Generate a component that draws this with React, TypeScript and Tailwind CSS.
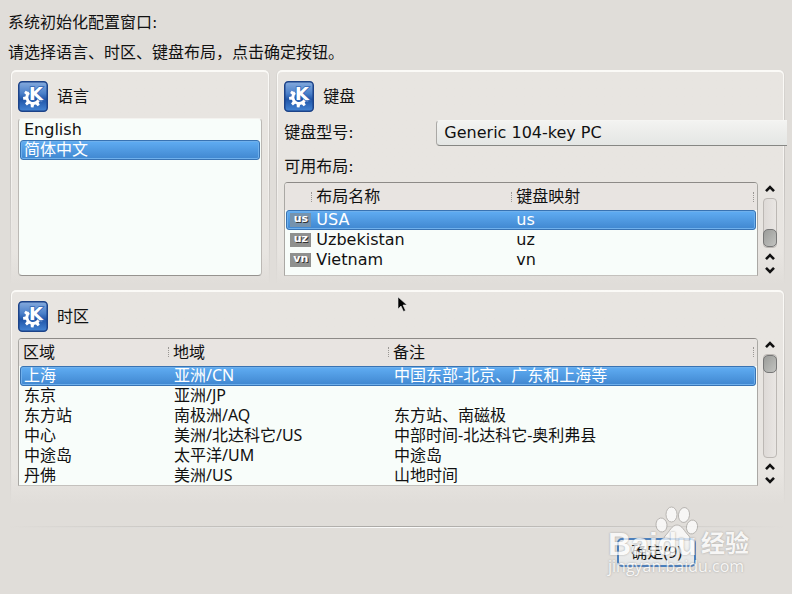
import { useState } from 'react';
import type { ReactNode } from 'react';
import clsx from 'clsx';

const LANGUAGES = ['English', '简体中文'];

const KEYBOARD_MODELS = ['Generic 104-key PC', 'Generic 105-key (Intl) PC'];

const LAYOUTS = [
  { name: 'USA', map: 'us' },
  { name: 'Uzbekistan', map: 'uz' },
  { name: 'Vietnam', map: 'vn' },
];

const TIMEZONES = [
  { area: '上海', region: '亚洲/CN', note: '中国东部-北京、广东和上海等' },
  { area: '东京', region: '亚洲/JP', note: '' },
  { area: '东方站', region: '南极洲/AQ', note: '东方站、南磁极' },
  { area: '中心', region: '美洲/北达科它/US', note: '中部时间-北达科它-奥利弗县' },
  { area: '中途岛', region: '太平洋/UM', note: '中途岛' },
  { area: '丹佛', region: '美洲/US', note: '山地时间' },
];

const selectedRow =
  'rounded-[3px] border-[#3873b3] bg-linear-to-b from-[#60adf3] to-[#4087d0] text-white shadow-[inset_0_0_0_1px_#6fb0ec]';
const plainRow = 'border-transparent';

// gear teeth, in degrees clockwise from twelve o'clock
const TEETH = [105, 145, 185, 225, 265, 305];

function KdeIcon() {
  return (
    <svg width="30" height="31" viewBox="0 0 30 31" aria-hidden="true">
      <defs>
        <linearGradient id="kde-bg" x1="0" y1="0" x2="0" y2="1">
          <stop offset="0" stopColor="#86abdd" />
          <stop offset="0.4" stopColor="#4a7fc9" />
          <stop offset="0.6" stopColor="#1f55a8" />
          <stop offset="1" stopColor="#4585d4" />
        </linearGradient>
      </defs>
      <rect x="0.75" y="0.75" width="28.5" height="29.5" rx="3.5" fill="url(#kde-bg)" stroke="#1d4388" strokeWidth="1.5" />
      <path d="M11 11.6A6.2 6.2 0 1 0 21.2 17.4" fill="none" stroke="#fff" strokeWidth="2.8" />
      <g fill="#fff">
        {TEETH.map(a => (
          <path key={a} d="M13.2 10l.5-3.400h2.600l.5 3.400z" transform={`rotate(${a} 15 16.500)`} />
        ))}
      </g>
      <text
        x="11"
        y="18.5"
        fontFamily="DejaVu Sans, sans-serif"
        fontWeight="700"
        fontSize="18"
        fill="#fff"
        stroke="#3268b8"
        strokeWidth="1.6"
        paintOrder="stroke"
      >
        K
      </text>
    </svg>
  );
}

function Panel({ title, children }: { title: string; children: ReactNode }) {
  return (
    <section className="rounded-t-[5px] bg-linear-to-b from-[#dad7d3] via-[#c4c1be] to-[#e0ddd9] px-px">
      <div className="h-full rounded-t-[5px] bg-linear-to-b from-[#fbfaf7] via-[#f4f2ef] to-[#e0ddd9] px-px pt-[2px]">
        <div className="flex h-full flex-col rounded-t-[4px] bg-linear-to-b from-[#e8e5e1] from-85% to-[#e0ddd9] px-[6px] pt-[9px] pb-[8px]">
          <div className="mb-[6px] flex items-center gap-[9px]">
            <KdeIcon />
            <h2 className="pt-px">{title}</h2>
          </div>
          {children}
        </div>
      </div>
    </section>
  );
}

function Chevron({ down }: { down?: boolean }) {
  return (
    <svg width="12" height="8" viewBox="0 0 12 8" aria-hidden="true">
      <path d={down ? 'M2 1.8l4 4 4-4' : 'M2 6.2l4-4 4 4'} fill="none" stroke="#111" strokeWidth="2.6" />
    </svg>
  );
}

function Scrollbar({ label, atEnd }: { label: string; atEnd?: boolean }) {
  return (
    <div className="flex w-[14px] flex-col items-center pt-[3px] pb-[2px]">
      <button type="button" aria-label={`${label} 向上`} className="flex h-[13px] items-start">
        <Chevron />
      </button>
      <div
        className={clsx(
          'mb-px flex w-[14px] flex-1 flex-col rounded-[4px] border border-[#bcb8b4] bg-linear-to-r from-[#dedad7] to-[#e9e6e3]',
          atEnd && 'justify-end'
        )}
      >
        <div className="-mx-px h-[18px] rounded-[5px] border border-[#777] bg-linear-to-br from-[#9b9c99] to-[#c2c3c0]" />
      </div>
      <button type="button" aria-label={`${label} 向上一行`} className="flex h-[12px] items-end">
        <Chevron />
      </button>
      <button type="button" aria-label={`${label} 向下一行`} className="flex h-[13px] items-end">
        <Chevron down />
      </button>
    </div>
  );
}

function HeaderCell({ children, last }: { children?: ReactNode; last?: boolean }) {
  return (
    <th className="flex items-center justify-between pl-[3px] text-left font-normal">
      <span>{children}</span>
      <span className={clsx('h-[10px] border-l border-dotted border-[#9a9794]', last ? 'mr-[2px]' : 'mr-px')} />
    </th>
  );
}

function Watermark() {
  return (
    <div className="pointer-events-none absolute right-[43px] bottom-[18px] w-[141px] opacity-75" aria-hidden="true">
      <svg className="-mb-[11px] ml-[47px] block" width="44" height="36" viewBox="0 0 44 36">
        <g fill="#fff" stroke="#a5a29e" strokeWidth="0.9">
          <ellipse cx="6.5" cy="20" rx="5.500" ry="7" transform="rotate(-8 6.5 20)" />
          <ellipse cx="16.500" cy="9.500" rx="5.500" ry="7.500" />
          <ellipse cx="29" cy="10" rx="5.500" ry="7.500" transform="rotate(8 29 10)" />
          <ellipse cx="37" cy="22" rx="5.500" ry="7" transform="rotate(12 37 22)" />
          <path d="M22 20c5 0 7 6 12 11 2 3 1 5-1 5H11c-2 0-3-2-1-5 5-5 7-11 12-11z" />
        </g>
      </svg>
      <div className="flex h-[27px] items-center justify-between font-bold whitespace-nowrap text-white [text-shadow:0_0_2px_#888]">
        <span className="font-['Liberation_Sans'] text-[32px]">Baidu</span>
        <span className="text-[24px]">经验</span>
      </div>
      <div className="font-['Open_Sans'] text-[16px] leading-[18px] whitespace-nowrap text-white [text-shadow:0_0_2px_#888]">
        jingyan.baidu.com
      </div>
    </div>
  );
}

export default function App() {
  const [language, setLanguage] = useState('简体中文');
  const [model, setModel] = useState(KEYBOARD_MODELS[0]);
  const [layout, setLayout] = useState('us');
  const [zone, setZone] = useState('上海');

  return (
    <main className="relative min-h-screen overflow-hidden bg-[#e0ddd9] font-['DejaVu_Sans','Noto_Sans_CJK_SC',sans-serif] text-[16px] leading-[20px] text-[#111]">
      <header className="px-[8px] pt-[8px] leading-[30px]">
        <h1>系统初始化配置窗口:</h1>
        <p>请选择语言、时区、键盘布局，点击确定按钮。</p>
      </header>

      <div className="mt-[2px] grid gap-[6px] pr-[7px] pl-[10px]">
        <div className="grid grid-cols-[65fr_127fr] gap-[6px]">
          <Panel title="语言">
            <ul
              role="listbox"
              aria-label="语言"
              className="flex-1 rounded-[4px] border border-t-[#f4f3f0] border-r-[#bbb8b4] border-b-[#96938f] border-l-[#bbb8b4] bg-[#f8fdfa] p-px"
            >
              {LANGUAGES.map(l => (
                <li
                  key={l}
                  role="option"
                  aria-selected={l === language}
                  onClick={() => setLanguage(l)}
                  className={clsx('h-[20px] border px-[3px] leading-[18px]', l === language ? selectedRow : plainRow)}
                >
                  {l}
                </li>
              ))}
            </ul>
          </Panel>

          <Panel title="键盘">
            <div className="mt-[2px] flex items-center">
              <label htmlFor="kb-model" className="w-[152px] shrink-0">键盘型号:</label>
              <select
                id="kb-model"
                value={model}
                onChange={e => setModel(e.target.value)}
                className="-mr-[10px] h-[26px] min-w-0 flex-1 appearance-none rounded-l-[4px] border border-r-0 border-t-[#f5f5f3] border-b-[#868784] border-l-[#aaa8a5] bg-linear-to-b from-[#f3f3f1] to-[#e4e6e4] px-[7px]"
              >
                {KEYBOARD_MODELS.map(m => (
                  <option key={m} value={m}>{m}</option>
                ))}
              </select>
            </div>
            <p id="kb-layouts" className="mt-[11px] mb-[5px]">可用布局:</p>
            <div className="flex gap-[5px]">
              <table
                aria-labelledby="kb-layouts"
                className="block h-[94px] min-w-0 flex-1 rounded-t-[4px] border border-t-[#8d8a87] border-r-[#aaa8a4] border-b-[#c4c1bd] border-l-[#aaa8a4] bg-[#f8fdfa]"
              >
                <thead className="block rounded-t-[3px] bg-[#e8e4e1] px-px">
                  <tr className="grid h-[27px] grid-cols-[27px_200px_1fr]">
                    <HeaderCell />
                    <HeaderCell>布局名称</HeaderCell>
                    <HeaderCell last>键盘映射</HeaderCell>
                  </tr>
                </thead>
                <tbody className="block px-px">
                  {LAYOUTS.map(l => (
                    <tr
                      key={l.map}
                      onClick={() => setLayout(l.map)}
                      className={clsx(
                        'grid h-[20px] grid-cols-[26px_200px_1fr] items-center border leading-[18px]',
                        l.map === layout ? selectedRow : plainRow
                      )}
                    >
                      <td className="pl-[3px]">
                        <span
                          className={clsx(
                            'block h-[14px] w-[21px] text-center text-[11px] leading-[12px] font-bold text-white [text-shadow:1px_1px_0_#333]',
                            l.map === layout ? 'bg-[#7593ae]' : 'bg-[#8f918f]'
                          )}
                        >
                          {l.map}
                        </span>
                      </td>
                      <td className="pl-[3px]">{l.name}</td>
                      <td className="pl-[3px]">{l.map}</td>
                    </tr>
                  ))}
                </tbody>
              </table>
              <Scrollbar label="可用布局" atEnd />
            </div>
          </Panel>
        </div>

        <Panel title="时区">
          <div className="mb-[10px] flex gap-[5px]">
            <table className="block h-[148px] min-w-0 flex-1 rounded-t-[4px] border border-t-[#8d8a87] border-r-[#aaa8a4] border-b-[#c4c1bd] border-l-[#aaa8a4] bg-[#f8fdfa] font-['Noto_Sans','Noto_Sans_CJK_SC',sans-serif]">
              <thead className="block rounded-t-[3px] bg-[#e8e4e1] px-px">
                <tr className="grid h-[27px] grid-cols-[150px_220px_1fr] pb-px">
                  <HeaderCell>区域</HeaderCell>
                  <HeaderCell>地域</HeaderCell>
                  <HeaderCell last>备注</HeaderCell>
                </tr>
              </thead>
              <tbody className="block px-px">
                {TIMEZONES.map(z => (
                  <tr
                    key={z.area}
                    onClick={() => setZone(z.area)}
                    className={clsx(
                      'grid h-[20px] grid-cols-[150px_220px_1fr] border leading-[16px] whitespace-nowrap',
                      z.area === zone ? selectedRow : plainRow
                    )}
                  >
                    <td className="pl-[3px]">{z.area}</td>
                    <td className="pl-[3px]">{z.region}</td>
                    <td className="pl-[3px]">{z.note}</td>
                  </tr>
                ))}
              </tbody>
            </table>
            <Scrollbar label="时区" />
          </div>
        </Panel>
      </div>

      <footer className="relative mt-[22px] pb-[26px]">
        <div className="mx-[8px] h-[2px] bg-linear-to-r from-transparent via-[#a9a7a4] to-transparent pt-px">
          <div className="h-px bg-linear-to-r from-transparent via-white to-transparent" />
        </div>
        <div className="mt-[10px] flex justify-end pr-[96px]">
          <button
            type="button"
            className="h-[29px] rounded-[5px] border-2 border-[#4a7fbd] bg-linear-to-b from-[#f4f4f3] to-[#e4e6e6] px-[12px] pb-[2px] font-['Noto_Sans','Noto_Sans_CJK_SC',sans-serif]"
          >
            确定(9)
          </button>
        </div>
        <Watermark />
      </footer>

      {/* mouse pointer */}
      <svg className="absolute top-[296px] left-[397px]" width="11" height="17" viewBox="0 0 11 17" aria-hidden="true">
        <path d="M1 1v12l3-3 2.500 5.500 2-1L6 9h4z" fill="#000" stroke="#e8e8e8" strokeWidth="0.6" />
      </svg>
    </main>
  );
}
